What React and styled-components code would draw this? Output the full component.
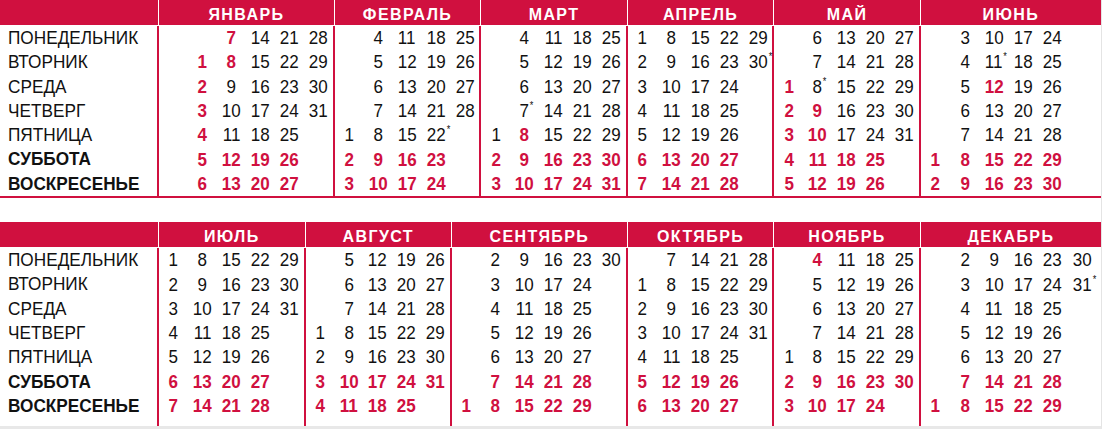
import React from 'react';
import styled, { createGlobalStyle } from 'styled-components';

const RED = '#d0103f';
const SLOT = 29.3;
const ROW = 24.3;
const YEAR = 2019;

const WEEKDAYS = ['ПОНЕДЕЛЬНИК', 'ВТОРНИК', 'СРЕДА', 'ЧЕТВЕРГ', 'ПЯТНИЦА', 'СУББОТА', 'ВОСКРЕСЕНЬЕ'];

// month index, name, slots it takes in the strip, empty slots before the first week
const HALVES = [
  [
    { m: 0, name: 'ЯНВАРЬ', slots: 6, lead: 1 },
    { m: 1, name: 'ФЕВРАЛЬ', slots: 5, lead: 0 },
    { m: 2, name: 'МАРТ', slots: 5, lead: 0 },
    { m: 3, name: 'АПРЕЛЬ', slots: 5, lead: 0 },
    { m: 4, name: 'МАЙ', slots: 5, lead: 0 },
    { m: 5, name: 'ИЮНЬ', slots: 6, lead: 0 },
  ],
  [
    { m: 6, name: 'ИЮЛЬ', slots: 5, lead: 0 },
    { m: 7, name: 'АВГУСТ', slots: 5, lead: 0 },
    { m: 8, name: 'СЕНТЯБРЬ', slots: 6, lead: 0 },
    { m: 9, name: 'ОКТЯБРЬ', slots: 5, lead: 0 },
    { m: 10, name: 'НОЯБРЬ', slots: 5, lead: 0 },
    { m: 11, name: 'ДЕКАБРЬ', slots: 6, lead: 0 },
  ],
];

const HOLIDAYS = {
  0: [1, 2, 3, 4, 7, 8],
  2: [8],
  4: [1, 2, 3, 9, 10],
  5: [12],
  10: [4],
};

const SHORT_DAYS = {
  1: [22],
  2: [7],
  3: [30],
  4: [8],
  5: [11],
  11: [31],
};

const buildMonth = ({ m, slots, lead }) => {
  const grid = Array.from({ length: 7 }, () => Array(slots).fill(null));
  const days = new Date(YEAR, m + 1, 0).getDate();
  let week = lead;
  for (let d = 1; d <= days; d++) {
    const wd = (new Date(YEAR, m, d).getDay() + 6) % 7;
    if (wd === 0 && d !== 1) week++;
    grid[wd][week] = {
      d,
      red: wd >= 5 || (HOLIDAYS[m] || []).includes(d),
      short: (SHORT_DAYS[m] || []).includes(d),
    };
  }
  return grid;
};

const GlobalStyle = createGlobalStyle`
  html, body {
    margin: 0;
    padding: 0;
    background: #fff;
  }
  body {
    font-family: "Liberation Sans", Arial, sans-serif;
    color: #111;
  }
`;

const Page = styled.div`
  width: 1102px;
  height: 429px;
  box-sizing: border-box;
  display: flex;
  flex-direction: column;
  gap: 24px;
  border-right: 1px solid #e4e4e4;
  border-bottom: 3px solid #e8e8e8;
  overflow: hidden;
`;

const Half = styled.section`
  display: flex;
  flex: ${p => (p.$open ? 1 : 'none')};
  border-bottom: ${p => (p.$open ? 'none' : `2px solid ${RED}`)};
`;

const Column = styled.div`
  display: flex;
  flex-direction: column;
  gap: 1px;
  box-sizing: border-box;
  width: ${p => (p.$width ? `${p.$width}px` : 'auto')};
  flex: ${p => (p.$width ? 'none' : 1)};
`;

const Head = styled.div`
  height: 25px;
  box-sizing: border-box;
  padding-top: 4px;
  background: ${RED};
  color: #fff;
  font-weight: 700;
  font-size: 16px;
  letter-spacing: 1.4px;
  display: flex;
  align-items: center;
  justify-content: center;
  border-right: ${p => (p.$last ? 'none' : '1px solid #fff')};
`;

const Body = styled.div`
  flex: 1;
  box-sizing: border-box;
  border-right: ${p => (p.$last ? 'none' : `2px solid ${RED}`)};
`;

const Label = styled.div`
  height: ${ROW}px;
  line-height: ${ROW}px;
  padding-left: 8px;
  font-size: 18.5px;
  font-weight: ${p => (p.$bold ? 700 : 400)};
  white-space: nowrap;

  span {
    display: inline-block;
    transform: scaleX(0.93);
    transform-origin: left center;
  }
`;

const Days = styled.div`
  display: grid;
  grid-template-columns: ${p => (p.$fluid ? `repeat(${p.$cols}, ${SLOT}px)` : `repeat(${p.$cols}, 1fr)`)};
  grid-auto-rows: ${ROW}px;
`;

const Day = styled.div`
  display: flex;
  align-items: center;
  justify-content: center;
  font-size: 18.5px;
  font-weight: ${p => (p.$red ? 700 : 400)};
  color: ${p => (p.$red ? RED : '#111')};
`;

const Num = styled.span`
  position: relative;
  display: inline-block;
  transform: scaleX(0.92);
`;

const Star = styled.span`
  position: absolute;
  left: 100%;
  top: 1px;
  margin-left: 1px;
  font-size: 10px;
  font-weight: 400;
  line-height: 1;
  color: #111;
`;

const MonthColumn = ({ month, last }) => {
  const grid = buildMonth(month);
  return (
    <Column $width={last ? null : month.slots * SLOT}>
      <Head $last={last}>{month.name}</Head>
      <Body $last={last}>
        <Days $cols={month.slots} $fluid={last}>
          {grid.flat().map((cell, i) => (
            <Day key={i} $red={cell && cell.red}>
              {cell && (
                <Num>
                  {cell.d}
                  {cell.short && <Star>*</Star>}
                </Num>
              )}
            </Day>
          ))}
        </Days>
      </Body>
    </Column>
  );
};

const App = () => (
  <>
    <GlobalStyle />
    <Page>
      {HALVES.map((months, h) => (
        <Half key={h} $open={h === 1}>
          <Column $width={159}>
            <Head />
            <Body>
              {WEEKDAYS.map((w, i) => (
                <Label key={w} $bold={i >= 5}>
                  <span>{w}</span>
                </Label>
              ))}
            </Body>
          </Column>
          {months.map((month, i) => (
            <MonthColumn key={month.m} month={month} last={i === months.length - 1} />
          ))}
        </Half>
      ))}
    </Page>
  </>
);

export default App;
